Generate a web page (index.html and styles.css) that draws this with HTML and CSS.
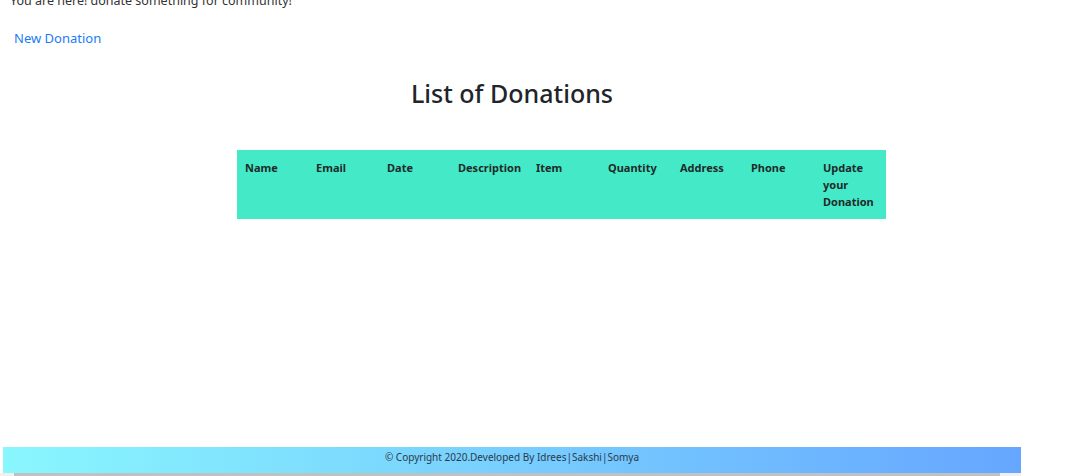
FILE: index.html
```html
<!DOCTYPE html>
<html>
<head>
<meta charset="utf-8">
<link rel="stylesheet" href="styles.css">
</head>
<body>
<div class="page">
  <p class="intro">You are here! donate something for community!</p>
  <a class="new-link" href="#">New Donation</a>
  <h1 class="title">List of Donations</h1>
  <div class="table-wrap">
    <table class="donations">
      <thead>
        <tr>
          <th>Name</th>
          <th>Email</th>
          <th>Date</th>
          <th class="c-desc">Description</th>
          <th class="c-w">Item</th>
          <th class="c-w">Quantity</th>
          <th>Address</th>
          <th class="c-w">Phone</th>
          <th>Update your Donation</th>
        </tr>
      </thead>
    </table>
  </div>
  <footer class="footer">© Copyright 2020.Developed By Idrees|Sakshi|Somya</footer>
  <div class="scrollbar"><div class="thumb"></div></div>
</div>
</body>
</html>
```

FILE: styles.css
```css
html, body {
  margin: 0;
  padding: 0;
  background: #ffffff;
  overflow: hidden;
}
body {
  font-family: "Noto Sans", "Open Sans", sans-serif;
  color: #212529;
}
.page {
  width: 1089px;
  height: 476px;
  overflow: hidden;
}
.intro {
  margin: -9px 0 0 10px;
  font-size: 12.5px;
  line-height: 20px;
  color: #333333;
}
.new-link {
  display: block;
  margin: 18px 0 0 14px;
  font-size: 13px;
  line-height: 18px;
  color: #1a7cf5;
  text-decoration: none;
  width: max-content;
}
.title {
  width: 1024px;
  margin: 29px 0 0 0;
  text-align: center;
  font-size: 25px;
  font-weight: 500;
  line-height: 34px;
  color: #212529;
}
.table-wrap {
  margin: 40px 0 0 237px;
  width: 649px;
}
.donations {
  width: 649px;
  border-collapse: collapse;
  background: #44e9c7;
  table-layout: fixed;
}
.donations th {
  text-align: left;
  vertical-align: top;
  font-size: 11px;
  font-weight: 700;
  line-height: 17px;
  padding: 9px 8px 9px 8px;
  width: 55px;
  color: #1f2a2a;
}
.donations th.c-desc {
  width: 62px;
}
.donations th.c-w {
  width: 56px;
}
.footer {
  margin: 228px 0 0 3px;
  width: 1018px;
  height: 26px;
  line-height: 20px;
  text-align: center;
  font-size: 10px;
  color: #2b3a4a;
  background: linear-gradient(to right, #89f7fe, #66a6ff);
}
.scrollbar {
  width: 1021px;
  height: 4px;
  background: #f0f0f0;
  padding-left: 14px;
  box-sizing: border-box;
}
.thumb {
  width: 986px;
  height: 3px;
  background: #c1c1c1;
}
```
